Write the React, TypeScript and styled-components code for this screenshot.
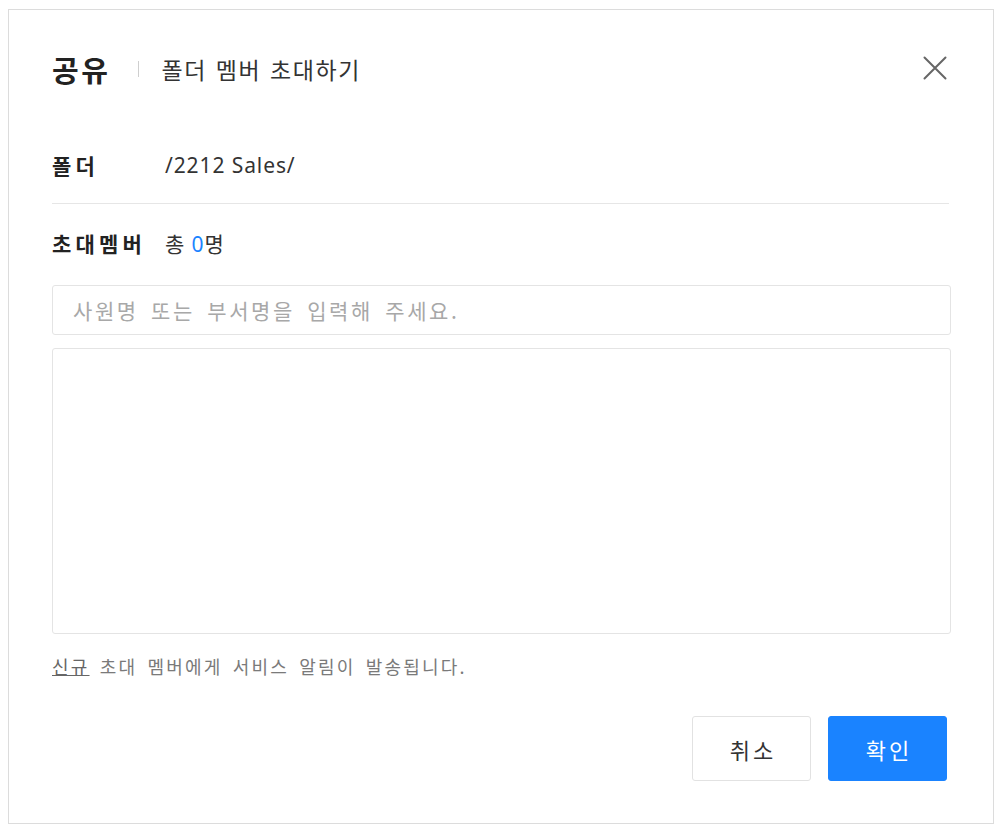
import React from "react";
import styled, { createGlobalStyle } from "styled-components";

const Global = createGlobalStyle`
  html, body { margin: 0; padding: 0; background: #ffffff; }
  body { font-family: "Noto Sans", "Noto Sans CJK KR", sans-serif; color: #222; }
  * { box-sizing: border-box; }
`;

const Page = styled.div`
  padding: 9px 0 0 8px;
`;

const Dialog = styled.div`
  width: 986px;
  height: 815px;
  border: 1px solid #dcdcdc;
  background: #fff;
  padding: 0 43px;
  display: flex;
  flex-direction: column;
`;

const Header = styled.div`
  height: 117px;
  display: flex;
  align-items: center;
`;

const Title = styled.h1`
  margin: 0;
  font-size: 29px;
  font-weight: 700;
  letter-spacing: 2.5px;
  color: #222;
  font-family: "Noto Sans CJK KR", sans-serif;
`;

const Sep = styled.span`
  width: 1px;
  height: 16px;
  background: #cfcfcf;
  margin: 0 22px 0 28px;
`;

const Subtitle = styled.span`
  font-size: 23px;
  letter-spacing: 1.6px;
  word-spacing: 2px;
  color: #333;
  font-family: "Noto Sans CJK KR", sans-serif;
  flex: 1;
`;

const CloseBtn = styled.button`
  border: 0;
  background: none;
  padding: 0;
  width: 28px;
  height: 28px;
  display: flex;
  align-items: center;
  justify-content: center;
  margin: -2px 1px 0 0;
  cursor: pointer;
`;

const Row = styled.div<{ $h: number; $divider?: boolean }>`
  height: ${(p) => p.$h}px;
  display: flex;
  align-items: center;
  border-bottom: ${(p) => (p.$divider ? "1px solid #e6e6e6" : "none")};
  margin-right: 1px;
`;

const Label = styled.span`
  width: 113px;
  font-size: 21px;
  font-weight: 700;
  letter-spacing: 4.2px;
  color: #222;
  font-family: "Noto Sans CJK KR", sans-serif;
`;

const Value = styled.span`
  font-size: 21px;
  letter-spacing: 0.9px;
  color: #333;
  font-family: "Noto Sans", "Noto Sans CJK KR", sans-serif;
`;

const Count = styled.span`
  color: #1a83ff;
`;

const Input = styled.input`
  margin-top: 3px;
  height: 50px;
  width: 899px;
  border: 1px solid #e4e4e4;
  border-radius: 3px;
  padding: 0 20px;
  font-size: 21px;
  letter-spacing: 2.6px;
  word-spacing: 5px;
  font-family: "Noto Sans CJK KR", sans-serif;
  color: #333;
  outline: none;
  &::placeholder { color: #a8a8a8; }
`;

const ListBox = styled.div`
  margin-top: 13px;
  height: 286px;
  width: 899px;
  border: 1px solid #e4e4e4;
  border-radius: 3px;
`;

const Note = styled.p`
  margin: 20px 0 0;
  font-size: 18px;
  line-height: 24px;
  letter-spacing: 2.2px;
  word-spacing: 4px;
  color: #7a7a7a;
  font-family: "Noto Sans CJK KR", sans-serif;
`;

const New = styled.span`
  text-decoration: underline;
  color: #666;
`;

const Actions = styled.div`
  margin-top: 38px;
  display: flex;
  justify-content: flex-end;
  gap: 17px;
  padding-right: 3px;
`;

const Btn = styled.button<{ $primary?: boolean }>`
  width: 119px;
  height: 65px;
  border-radius: 3px;
  border: 1px solid ${(p) => (p.$primary ? "#1a83ff" : "#e2e2e2")};
  background: ${(p) => (p.$primary ? "#1a83ff" : "#fff")};
  color: ${(p) => (p.$primary ? "#fff" : "#333")};
  font-size: 22px;
  letter-spacing: 3px;
  text-indent: 3px;
  font-family: "Noto Sans CJK KR", sans-serif;
  cursor: pointer;
`;

export default function App() {
  return (
    <>
      <Global />
      <Page>
        <Dialog>
          <Header>
            <Title>공유</Title>
            <Sep />
            <Subtitle>폴더 멤버 초대하기</Subtitle>
            <CloseBtn aria-label="닫기">
              <svg width="24" height="24" viewBox="0 0 24 24">
                <path d="M1.5 1.5L22.5 22.5M22.5 1.5L1.5 22.5" stroke="#666" strokeWidth="2" strokeLinecap="round" />
              </svg>
            </CloseBtn>
          </Header>
          <Row $h={77} $divider>
            <Label>폴더</Label>
            <Value>/2212 Sales/</Value>
          </Row>
          <Row $h={78}>
            <Label>초대멤버</Label>
            <Value>
              총 <Count>0</Count>명
            </Value>
          </Row>
          <Input placeholder="사원명 또는 부서명을 입력해 주세요." />
          <ListBox />
          <Note>
            <New>신규</New> 초대 멤버에게 서비스 알림이 발송됩니다.
          </Note>
          <Actions>
            <Btn>취소</Btn>
            <Btn $primary>확인</Btn>
          </Actions>
        </Dialog>
      </Page>
    </>
  );
}
